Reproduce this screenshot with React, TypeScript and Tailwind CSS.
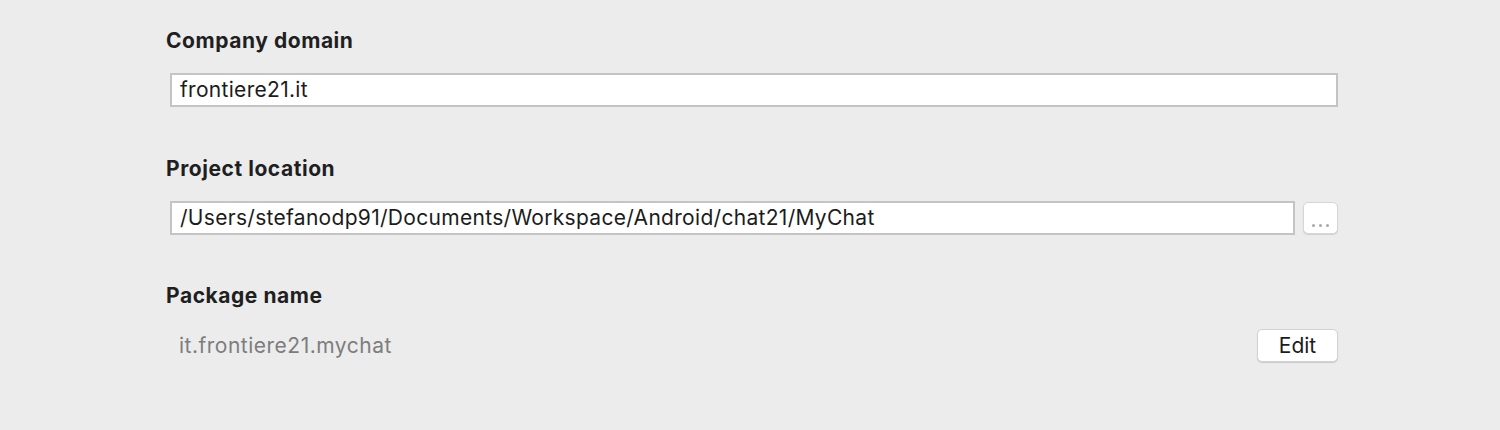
import React from "react"

const font = { fontFamily: 'Inter, "Liberation Sans", Arial, sans-serif' }

function Label({ children }: { children: React.ReactNode }) {
  return (
    <div className="h-6 text-[21px] leading-6 font-bold text-[#1f1f1f] tracking-[0.55px]">
      {children}
    </div>
  )
}

function TextField({ value }: { value: string }) {
  return (
    <div className="flex-1 h-[34px] bg-white border-2 border-[#c4c4c4] flex items-center px-2 text-[21px] text-[#1c1c1c] tracking-[0.3px]">
      {value}
    </div>
  )
}

export default function App() {
  return (
    <div className="w-[1500px] h-[430px] bg-[#ececec] pl-[166px] pr-[162px] pt-[29px]" style={font}>
      {/* Company domain */}
      <Label>Company domain</Label>
      <div className="mt-5 ml-1 flex">
        <TextField value="frontiere21.it" />
      </div>

      {/* Project location */}
      <div className="mt-[50px]">
        <Label>Project location</Label>
      </div>
      <div className="mt-5 ml-1 flex items-center gap-2">
        <TextField value="/Users/stefanodp91/Documents/Workspace/Android/chat21/MyChat" />
        <button className="w-[35px] h-[32px] bg-white rounded-[5px] border border-[#d6d6d6] shadow-[0_1px_1px_rgba(0,0,0,0.12)] flex items-end justify-center gap-[4px] pb-[6px]">
          <span className="w-[3px] h-[3px] rounded-full bg-[#a8a8a8]" />
          <span className="w-[3px] h-[3px] rounded-full bg-[#a8a8a8]" />
          <span className="w-[3px] h-[3px] rounded-full bg-[#a8a8a8]" />
        </button>
      </div>

      {/* Package name */}
      <div className="mt-[49px]">
        <Label>Package name</Label>
      </div>
      <div className="mt-[21px] ml-1 flex items-center justify-between">
        <span className="pl-[9px] text-[21px] text-[#7d7d7d] tracking-[0.5px]">it.frontiere21.mychat</span>
        <button className="w-[81px] h-[33px] bg-white rounded-[5px] border border-[#d2d2d2] shadow-[0_1px_1px_rgba(0,0,0,0.15)] text-[21px] text-[#1c1c1c] flex items-center justify-center">
          Edit
        </button>
      </div>
    </div>
  )
}
